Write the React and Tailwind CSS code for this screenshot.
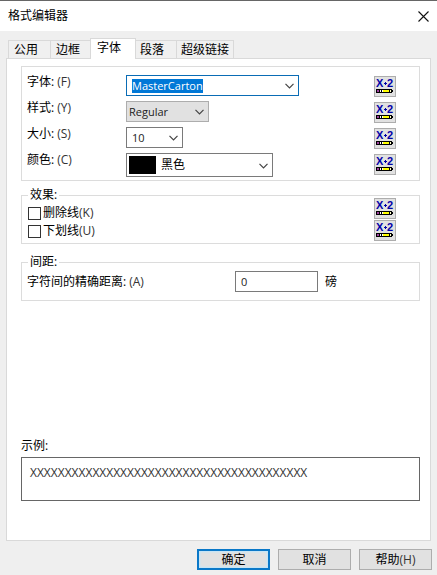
import { useEffect, useRef, useState } from 'react'

const tabs = [
  { id: 'general', label: '公用', className: 'h-[18px] w-[42px] pl-[5px] border-l' },
  { id: 'border', label: '边框', className: 'h-[18px] w-[40px] pl-[5px] border-l' },
  { id: 'font', label: '字体', className: 'h-[21px] w-[46px] pl-[6px] border-x' },
  { id: 'paragraph', label: '段落', className: 'h-[18px] w-[40px] pl-[4px]' },
  { id: 'link', label: '超级链接', className: 'h-[18px] w-[58px] pl-[4px] border-x' },
]

function Chevron() {
  return (
    <svg width="9" height="6" viewBox="0 0 9 6" fill="none" stroke="#444" strokeWidth="1.2" aria-hidden="true">
      <path d="M0.5 0.8L4.5 4.8L8.5 0.8" />
    </svg>
  )
}

function FormulaButton({ label }) {
  return (
    <button type="button" aria-label={label} className="flex h-[21px] w-[22px] shrink-0 border border-[#adadad] bg-[#e1e1e1]">
      <svg width="20" height="19" viewBox="0 0 20 19" aria-hidden="true">
        <g fill="#0000a8" fontFamily="Liberation Sans" fontWeight="bold" fontSize="11">
          <text x="1" y="10">X</text>
          <text x="12" y="10">2</text>
        </g>
        <path d="M9 6h3v1h-3zM10 5h1v3h-1z" fill="#0000a8" />
        <path d="M1 12h16v1h1v2h-1v1H1z" fill="#000" />
        <path d="M2 13h2v2H2z" fill="#a040a0" />
        <path d="M5 13h1v2H5zM7 13h1v2H7z" fill="#fff" />
        <path d="M8 13h6v2H8z" fill="#ff0" />
        <path d="M15 13h1v2h-1z" fill="#ffc" />
      </svg>
    </button>
  )
}

function Row({ id, label, hotkey, children }) {
  return (
    <div className="flex items-start">
      <label htmlFor={id} className="w-[99px] shrink-0">{label}:<span className="pl-[3px] text-[#333]">({hotkey})</span></label>
      <div className="flex-1">{children}</div>
      <div className="mt-px mr-[23px]"><FormulaButton label={`${label}公式`} /></div>
    </div>
  )
}

function Check({ id, label, hotkey }) {
  return (
    <div className="flex h-[18px] items-center gap-[2px] pl-px">
      <input id={id} type="checkbox" className="size-[13px] appearance-none border border-[#333] bg-white checked:bg-[#333]" />
      <label htmlFor={id}>{label}<span className="text-[#333]">({hotkey})</span></label>
    </div>
  )
}

export default function App() {
  const [tab, setTab] = useState('font')
  const [font, setFont] = useState('MasterCarton')
  const [spacing, setSpacing] = useState('0')
  const fontRef = useRef(null)

  useEffect(() => {
    fontRef.current.focus()
    fontRef.current.select()
  }, [])

  return (
    <div className="flex min-h-screen flex-col bg-[#efefef] font-['Open_Sans','Noto_Sans_CJK_SC',sans-serif] text-[12px] leading-[14px] text-black">
      <header className="flex h-[31px] items-center justify-between border-t border-[#666] bg-white pr-[8px] pl-[8px]">
        <h1>格式编辑器</h1>
        <button type="button" aria-label="关闭">
          <svg width="11" height="11" viewBox="0 0 11 11" stroke="#111" strokeWidth="1.1" aria-hidden="true">
            <path d="M0.5 0.5L10.5 10.5M10.5 0.5L0.5 10.5" />
          </svg>
        </button>
      </header>

      <main className="flex flex-1 flex-col pt-[7px] pr-[5px] pb-[5px] pl-[6px]">
        <div role="tablist" className="flex items-end pl-[2px]">
          {tabs.map((t) => (
            <button
              key={t.id}
              type="button"
              role="tab"
              aria-selected={tab === t.id}
              onClick={() => setTab(t.id)}
              className={`border-t border-[#d9d9d9] text-left ${t.className} ${tab === t.id ? 'relative -mb-px bg-white pb-[2px]' : 'bg-[#f0f0f0]'}`}
            >
              {t.label}
            </button>
          ))}
        </div>

        <section className="mr-px flex flex-1 flex-col border border-[#d9d9d9] bg-white pt-[7px] pr-[10px] pb-[39px] pl-[14px]">
          <div className="flex flex-col gap-[4px] border border-[#dcdcdc] pt-[8px] pb-[3px] pl-[5px]">
            <Row id="font" label="字体" hotkey="F">
              <div className="flex h-[21px] w-[173px] items-center border border-[#0a6cb5] pr-[4px] pl-[5px]">
                <input
                  id="font"
                  ref={fontRef}
                  value={font}
                  onChange={(e) => setFont(e.target.value)}
                  className="w-full min-w-0 flex-1 text-[11px] outline-none selection:bg-[#0078d7] selection:text-white"
                />
                <button type="button" aria-label="选择字体"><Chevron /></button>
              </div>
            </Row>
            <Row id="style" label="样式" hotkey="Y">
              <div className="relative h-[21px] w-[83px]">
                <select id="style" className="h-full w-full appearance-none border border-[#adadad] bg-[#e1e1e1] pl-[2px] text-[11px] text-[#222]">
                  <option>Regular</option>
                </select>
                <span className="pointer-events-none absolute top-[8px] right-[5px]"><Chevron /></span>
              </div>
            </Row>
            <Row id="size" label="大小" hotkey="S">
              <div className="relative h-[21px] w-[57px]">
                <select id="size" className="h-full w-full appearance-none border border-[#7a7a7a] bg-white pl-[5px] text-[11px] text-[#222]">
                  <option>10</option>
                </select>
                <span className="pointer-events-none absolute top-[8px] right-[5px]"><Chevron /></span>
              </div>
            </Row>
            <Row id="color" label="颜色" hotkey="C">
              <div className="relative flex h-[24px] w-[147px] items-center border border-[#7a7a7a] pl-[2px]">
                <span className="h-[18px] w-[27px] bg-black" />
                <select id="color" className="h-full flex-1 appearance-none pl-[5px]">
                  <option>黑色</option>
                </select>
                <span className="pointer-events-none absolute top-[9px] right-[4px]"><Chevron /></span>
              </div>
            </Row>
          </div>

          <fieldset className="mt-[7px] border border-[#dcdcdc] pb-[2px] pl-[5px]">
            <legend className="ml-px px-[2px]">效果:</legend>
            <div className="flex justify-between">
              <div className="pt-[2px]">
                <Check id="strike" label="删除线" hotkey="K" />
                <Check id="underline" label="下划线" hotkey="U" />
              </div>
              <div className="-mt-[4px] mr-[23px] flex flex-col gap-px">
                <FormulaButton label="删除线公式" />
                <FormulaButton label="下划线公式" />
              </div>
            </div>
          </fieldset>

          <fieldset className="mt-[11px] border border-[#dcdcdc] pt-[2px] pb-[8px] pl-[5px]">
            <legend className="ml-px px-[2px]">间距:</legend>
            <div className="flex items-center">
              <label htmlFor="spacing" className="w-[208px] shrink-0">字符间的精确距离:<span className="pl-[3px] text-[#333]">(A)</span></label>
              <input
                id="spacing"
                value={spacing}
                onChange={(e) => setSpacing(e.target.value)}
                className="h-[21px] w-[83px] border border-[#7a7a7a] px-[5px] text-[11px] text-[#222] outline-none"
              />
              <span className="pl-[7px]">磅</span>
            </div>
          </fieldset>

          <div className="mt-auto pt-4">
            <h2>示例:</h2>
            <div className="mt-[4px] h-[44px] overflow-hidden border border-[#666] px-[8px] pt-[8px] text-[#333]">
              XXXXXXXXXXXXXXXXXXXXXXXXXXXXXXXXXXXXXXXX
            </div>
          </div>
        </section>

        <footer className="mt-[8px] flex justify-end gap-[8px]">
          <button type="button" className="h-[21px] w-[73px] border-2 border-[#0a78c8] bg-[#e1e1e1] shadow-[inset_0_0_2px_1px_#bfe6fb]">确定</button>
          <button type="button" className="h-[21px] w-[73px] border border-[#adadad] bg-[#e1e1e1]">取消</button>
          <button type="button" className="h-[21px] w-[73px] border border-[#adadad] bg-[#e1e1e1]">帮助<span className="text-[#333]">(H)</span></button>
        </footer>
      </main>
    </div>
  )
}
